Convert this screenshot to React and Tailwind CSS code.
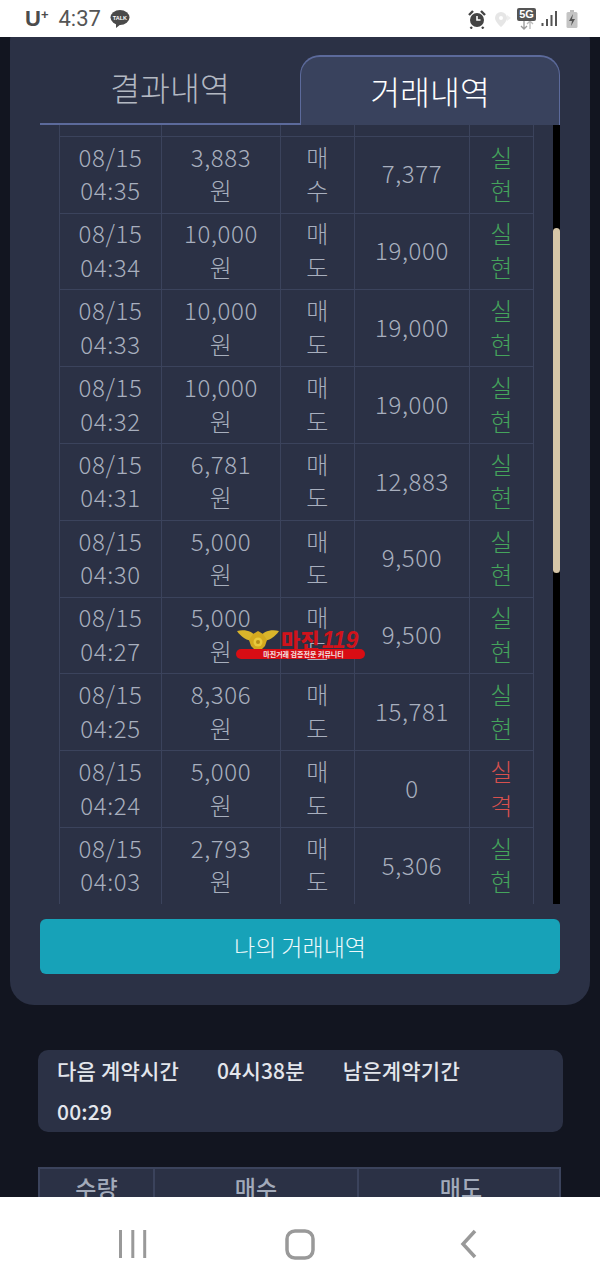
const rows = [
  ['', '', '', '', '', '', '', ''],
  ['08/15', '04:35', '3,883', '원', '매', '수', '7,377', 'ok'],
  ['08/15', '04:34', '10,000', '원', '매', '도', '19,000', 'ok'],
  ['08/15', '04:33', '10,000', '원', '매', '도', '19,000', 'ok'],
  ['08/15', '04:32', '10,000', '원', '매', '도', '19,000', 'ok'],
  ['08/15', '04:31', '6,781', '원', '매', '도', '12,883', 'ok'],
  ['08/15', '04:30', '5,000', '원', '매', '도', '9,500', 'ok'],
  ['08/15', '04:27', '5,000', '원', '매', '도', '9,500', 'ok'],
  ['08/15', '04:25', '8,306', '원', '매', '도', '15,781', 'ok'],
  ['08/15', '04:24', '5,000', '원', '매', '도', '0', 'fail'],
  ['08/15', '04:03', '2,793', '원', '매', '도', '5,306', 'ok'],
];

function Cell({ a, b, className = '' }) {
  return (
    <div className={`flex flex-col items-center justify-center border-r border-[#3b435c] pb-[3px] text-center ${className}`}>
      <span>{a}</span>
      {b ? <span>{b}</span> : null}
    </div>
  );
}

function Row({ r }) {
  const [d, t, amt, won, s1, s2, res, st] = r;
  const status = st === 'ok' ? ['실', '현', 'text-[#45a45c]'] : st === 'fail' ? ['실', '격', 'text-[#d8504e]'] : ['', '', ''];
  return (
    <div className="grid h-[76.8px] grid-cols-[103px_119px_74px_115px_64px] border-b border-[#3b435c] text-[24px] font-light leading-[33.5px] tracking-[0.6px] text-[#a8afbe]">
      <Cell a={d} b={t} className="border-l" />
      <Cell a={amt} b={won} />
      <Cell a={s1} b={s2} />
      <Cell a={res} />
      <Cell a={status[0]} b={status[1]} className={status[2]} />
    </div>
  );
}

function StatusBar() {
  return (
    <div className="flex h-[37px] items-center justify-between bg-white pl-[25px] pr-[22px] text-[#555]">
      <div className="flex items-center">
        <span className="relative font-['Liberation_Sans',sans-serif] text-[22px] font-bold leading-none text-[#4c4c4c]">U<sup className="text-[13px] leading-none">+</sup></span>
        <span className="ml-[10px] font-['Roboto',sans-serif] text-[22px] leading-none text-[#555]">4:37</span>
        <svg width="20" height="20" viewBox="0 0 20 20" className="ml-[9px]">
          <ellipse cx="10" cy="8.500" rx="9.500" ry="7.500" fill="#4a4a4a" />
          <path d="M6 13 L6 19 L11 15 Z" fill="#4a4a4a" />
        </svg>
        <span className="ml-[-18px] w-[16px] text-center font-['Liberation_Sans',sans-serif] text-[5.500px] font-bold leading-none text-white">TALK</span>
      </div>
      <div className="flex items-center">
        <svg width="20" height="20" viewBox="0 0 20 20">
          <circle cx="10" cy="11" r="7" fill="#444" />
          <path d="M2 6 L6 2 M18 6 L14 2 M5 18 L3.500 19.500 M15 18 L16.500 19.500" stroke="#444" strokeWidth="2.400" />
          <path d="M10 7 V11 H13.500" stroke="#fff" strokeWidth="1.600" fill="none" />
        </svg>
        <svg width="18" height="20" viewBox="0 0 18 20" className="ml-[7px]">
          <path d="M7 3 a6 6 0 0 1 6 6 c0 4-6 9-6 9 s-6-5-6-9 a6 6 0 0 1 6-6 Z" fill="#e6e6e6" />
          <circle cx="7" cy="9" r="2" fill="#fff" />
          <path d="M13 6 L17 9 L13 12 Z" fill="#eee" />
        </svg>
        <div className="ml-[5px] flex flex-col items-center">
          <span className="flex h-[13px] w-[19px] items-center justify-center rounded-[2px] bg-[#555] font-['Liberation_Sans',sans-serif] text-[11px] font-bold leading-none text-white">5G</span>
          <svg width="16" height="9" viewBox="0 0 16 9">
            <path d="M5 0 V8 M2 5 L5 8 L8 5" stroke="#9a9a9a" strokeWidth="1.300" fill="none" />
            <path d="M11 8 V0 M8 3 L11 0 L14 3" stroke="#bbb" strokeWidth="1.300" fill="none" />
          </svg>
        </div>
        <svg width="17" height="18" viewBox="0 0 17 18" className="ml-[5px]">
          <rect x="0.500" y="13" width="2" height="3" fill="#555" />
          <rect x="5" y="9" width="2" height="7" fill="#555" />
          <rect x="9.500" y="5" width="2" height="11" fill="#555" />
          <rect x="14" y="1" width="2" height="15" fill="#555" />
        </svg>
        <svg width="12" height="20" viewBox="0 0 12 20" className="ml-[8px]">
          <rect x="4" y="1" width="4" height="2" fill="#bdbdbd" />
          <rect x="0.500" y="3" width="11" height="16" rx="1.500" fill="#c4c4c4" />
          <path d="M7 5 L3 12 H6 L5 17 L9 10 H6 Z" fill="#555" />
        </svg>
      </div>
    </div>
  );
}

function Watermark() {
  return (
    <div className="pointer-events-none absolute left-[236px] top-[627px] h-[34px] w-[130px]">
      <svg width="44" height="24" viewBox="0 0 44 24" className="absolute left-0 top-[2px]">
        <path d="M1 2 C10 0 17 3 20 8 L18 12 C11 12 5 8 1 2 Z" fill="#d9b52b" />
        <path d="M43 2 C34 0 27 3 24 8 L26 12 C33 12 39 8 43 2 Z" fill="#d9b52b" />
        <path d="M22 2 L27 5 L31 11 L29 17 L25 21 H19 L15 17 L13 11 L17 5 Z" fill="#d3a91f" />
        <circle cx="22" cy="13" r="4.500" fill="#e9c93c" />
        <circle cx="22" cy="13" r="2" fill="#b68f17" />
      </svg>
      <div className="absolute left-[45px] top-[-1px] flex items-baseline font-['Noto_Sans_CJK_KR',sans-serif] text-[21px] font-black leading-[26px] text-[#d0131b]">
        마진<span className="ml-[2px] font-['Liberation_Sans',sans-serif] text-[23px] font-bold italic">119</span>
      </div>
      <div className="absolute bottom-[2px] left-0 flex h-[10px] w-[129px] items-center justify-center rounded-full bg-[#d80d14] pl-[6px] font-['Noto_Sans_CJK_KR',sans-serif] text-[7px] font-bold leading-none text-[#f3e3e3]">
        마진거래 검증전문 커뮤니티
      </div>
    </div>
  );
}

export default function App() {
  return (
    <div className="relative flex h-[1287px] w-[600px] flex-col overflow-hidden bg-white font-['Noto_Sans_CJK_KR','Noto_Sans',sans-serif]">
      <StatusBar />
      <main className="h-[1160px] overflow-hidden bg-[#121520]">
        <section className="mx-[10px] mt-[-20px] rounded-[24px] bg-[#2b3145] px-[30px] pb-[31px] pt-[38px]">
          <div className="flex h-[70px]">
            <div className="flex h-full w-[260px] items-center justify-center border-b-2 border-[#5c6a9b] pb-[3px] text-[32.500px] font-light text-[#b3b8c2]">결과내역</div>
            <div className="flex h-full w-[260px] items-center justify-center rounded-t-[20px] border-x-[1.500px] border-t-2 border-[#5c6a9b] bg-[#39425d] text-[32.500px] font-light text-white">거래내역</div>
          </div>
          <div className="flex h-[779px] overflow-hidden">
            <div className="ml-[19px] w-[475px]">
              <div className="mt-[-65px]">
                {rows.map((r, i) => <Row key={i} r={r} />)}
              </div>
            </div>
            <div className="ml-[19px] w-[7px] bg-black">
              <div className="mt-[103px] h-[345px] rounded-full bg-[#d6c6a8]" />
            </div>
          </div>
          <button className="mt-[15px] flex h-[55px] w-[520px] items-center justify-center rounded-[6px] bg-[#17a2b8] text-[23px] font-light text-[#eef9fb]">나의 거래내역</button>
        </section>
        <div className="ml-[38px] mt-[45px] flex h-[82px] w-[525px] flex-wrap content-start gap-x-[38px] rounded-[10px] bg-[#2b3145] px-[19px] text-[21px] font-medium leading-[41px] tracking-[0.2px] text-[#e3e6ec]">
          <span>다음 계약시간</span>
          <span>04시38분</span>
          <span>남은계약기간</span>
          <span className="basis-full">00:29</span>
        </div>
        <div className="ml-[38px] mt-[35px] grid w-[523px] grid-cols-[115px_204px_204px] border-2 border-[#3b435c] bg-[#2b3145] text-center text-[23px] font-medium leading-[36px] text-[#a2aaba]">
          <div className="border-r-2 border-[#3b435c]">수량</div>
          <div className="border-r-2 border-[#3b435c]">매수</div>
          <div>매도</div>
        </div>
      </main>
      <nav className="flex h-[90px] items-start bg-white pl-[118px] pt-[32px]">
        <svg width="30" height="30" viewBox="0 0 30 30" className="mr-[136px]">
          <path d="M2.500 1 V29 M14.800 1 V29 M26.700 1 V29" stroke="#999" strokeWidth="3" />
        </svg>
        <svg width="32" height="32" viewBox="0 0 32 32" className="mr-[144px]">
          <rect x="3" y="2" width="26" height="27" rx="8" fill="none" stroke="#999" strokeWidth="3.500" />
        </svg>
        <svg width="18" height="30" viewBox="0 0 18 30">
          <path d="M15 2 L3 15 L15 28" fill="none" stroke="#999" strokeWidth="3.500" />
        </svg>
      </nav>
      <Watermark />
    </div>
  );
}
